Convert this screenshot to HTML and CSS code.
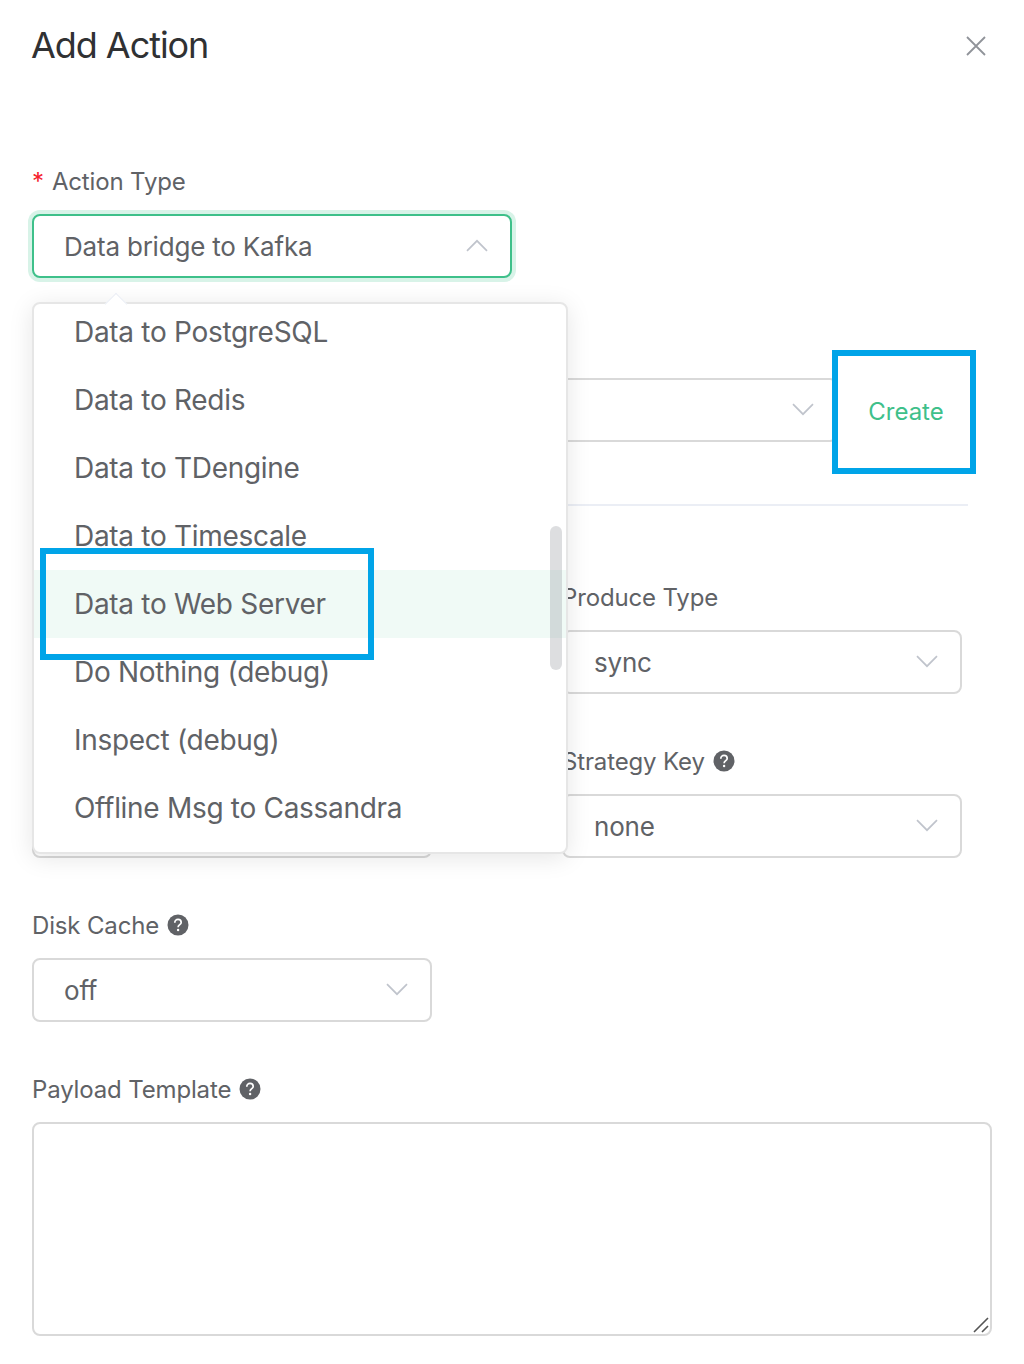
FILE: index.html
```html
<!DOCTYPE html>
<html lang="en">
<head>
<meta charset="utf-8">
<title>Add Action</title>
<link rel="stylesheet" href="styles.css">
</head>
<body>
<svg class="defs" width="0" height="0">
  <symbol id="chevron" viewBox="0 0 22 13"><path d="M1 1.2 11 11.2 21 1.2" fill="none" stroke="currentColor" stroke-width="1.7"/></symbol>
  <symbol id="help" viewBox="0 0 22 22">
    <circle cx="11" cy="11" r="10.5" fill="currentColor"/>
    <path d="M7.8 8.7C7.8 6.6 9.2 5.4 11 5.4S14.2 6.6 14.2 8.4C14.2 10.6 11.1 10.7 11.1 13.2" fill="none" stroke="#fff" stroke-width="1.7"/>
    <circle cx="11.1" cy="16" r="1.2" fill="#fff"/>
  </symbol>
</svg>
<main class="dialog">
  <header class="header">
    <h1 class="title">Add Action</h1>
    <svg class="close" viewBox="0 0 20 20"><path d="M1 1 19 19M19 1 1 19" fill="none" stroke="currentColor" stroke-width="1.8"/></svg>
  </header>
  <form class="form">
    <div class="field">
      <div class="label"><span class="required">*</span><span>Action Type</span></div>
      <div class="select select-type is-open">
        <span class="value">Data bridge to Kafka</span>
        <svg class="chevron up"><use href="#chevron"/></svg>
        <div class="dropdown">
          <div class="arrow"></div>
          <div class="viewport">
            <ul class="options">
              <li>Data to PostgreSQL</li>
              <li>Data to Redis</li>
              <li>Data to TDengine</li>
              <li>Data to Timescale</li>
              <li class="active">Data to Web Server<span class="marker marker-option"></span></li>
              <li>Do Nothing (debug)</li>
              <li>Inspect (debug)</li>
              <li>Offline Msg to Cassandra</li>
            </ul>
          </div>
          <div class="scrollbar"></div>
        </div>
      </div>
    </div>
    <div class="field resource">
      <div class="select select-resource"><svg class="chevron"><use href="#chevron"/></svg></div>
      <div class="create"><span>Create</span><span class="marker marker-create"></span></div>
    </div>
    <hr class="divider">
    <div class="row">
      <div class="field">
        <div class="label"></div>
        <div class="select"></div>
      </div>
      <div class="field">
        <div class="label">Produce Type</div>
        <div class="select"><span class="value">sync</span><svg class="chevron"><use href="#chevron"/></svg></div>
      </div>
    </div>
    <div class="row">
      <div class="field">
        <div class="label"></div>
        <div class="select"></div>
      </div>
      <div class="field">
        <div class="label">Strategy Key<svg class="help"><use href="#help"/></svg></div>
        <div class="select"><span class="value">none</span><svg class="chevron"><use href="#chevron"/></svg></div>
      </div>
    </div>
    <div class="row">
      <div class="field">
        <div class="label">Disk Cache<svg class="help"><use href="#help"/></svg></div>
        <div class="select"><span class="value">off</span><svg class="chevron"><use href="#chevron"/></svg></div>
      </div>
    </div>
    <div class="field">
      <div class="label">Payload Template<svg class="help"><use href="#help"/></svg></div>
      <div class="textarea">
        <svg class="grip" viewBox="0 0 16 16"><path d="M1 15 15 1M9 15 15 9" fill="none" stroke="#555" stroke-width="1.6"/></svg>
      </div>
    </div>
  </form>
</main>
</body>
</html>
```
FILE: styles.css
```css
* { box-sizing: border-box; }
body {
  margin: 0;
  background: #fff;
  color: #606266;
  font-family: Inter, "Liberation Sans", sans-serif;
}
.defs { display: block; }
.dialog {
  width: 1024px;
  height: 1364px;
  padding: 0 32px;
  overflow: hidden;
}
.header {
  display: flex;
  align-items: center;
  justify-content: space-between;
  height: 92px;
  padding-right: 6px;
}
.title {
  margin: 0 0 2px -1px;
  color: #303133;
  font-size: 36px;
  font-weight: 400;
  letter-spacing: -1.05px;
}
.close { width: 20px; height: 20px; color: #909399; }
.form { padding-top: 58px; }
.field { margin-bottom: 36px; }
.label {
  display: flex;
  align-items: center;
  height: 64px;
  padding-bottom: 2px;
  font-size: 24px;
  letter-spacing: -0.15px;
}
.required { margin-right: 8px; color: #f5222d; }
.help { width: 22px; height: 22px; margin-left: 8px; }
.select {
  position: relative;
  display: flex;
  align-items: center;
  width: 400px;
  height: 64px;
  padding: 0 22px 0 30px;
  border: 2px solid #d9d9d9;
  border-radius: 8px;
  background: #fff;
  font-size: 26px;
  letter-spacing: -0.2px;
}
.select-type { width: 480px; }
.is-open {
  border-color: #3ec08a;
  box-shadow: 0 0 0 4px #d8f3e8;
}
.chevron {
  width: 22px;
  height: 13px;
  margin: 0 0 1px auto;
  color: #c0c4cc;
}
.up { transform: rotate(180deg); }
.dropdown {
  position: absolute;
  z-index: 2;
  top: 86px;
  left: -2px;
  width: 536px;
  height: 552px;
  border: 2px solid #e6e6e6;
  border-radius: 8px;
  background: #fff;
  box-shadow: 0 4px 24px rgba(0, 0, 0, 0.1);
}
.arrow {
  position: absolute;
  top: -8px;
  left: 74px;
  width: 16px;
  height: 16px;
  border: 1px solid #ebeef5;
  border-right: 0;
  border-bottom: 0;
  background: #fff;
  transform: rotate(45deg);
}
.viewport { position: relative; height: 548px; }
.options {
  margin: 0;
  padding: 0;
  list-style: none;
  transform: translateY(-6px);
}
.options li {
  position: relative;
  height: 68px;
  padding-left: 40px;
  font-size: 28px;
  letter-spacing: -0.3px;
  line-height: 69px;
}
.options .active { background: #f0faf6; }
.scrollbar {
  position: absolute;
  top: 222px;
  right: 4px;
  width: 12px;
  height: 144px;
  border-radius: 6px;
  background: rgba(144, 147, 153, 0.3);
}
.marker { position: absolute; border: 6px solid #00a4e8; }
.marker-option { z-index: 1; top: -22px; left: 6px; width: 334px; height: 112px; }
.marker-create { inset: 0; }
.resource { display: flex; align-items: center; padding-top: 36px; margin-bottom: 0; }
.select-resource { width: 806px; margin-bottom: 4px; }
.create {
  position: relative;
  display: flex;
  align-items: center;
  justify-content: center;
  width: 144px;
  height: 124px;
  padding: 0 0 2px 4px;
  margin-left: -6px;
  color: #3ec08a;
  font-size: 24px;
}
.divider {
  width: 936px;
  height: 2px;
  margin: 30px 0 60px;
  border: 0;
  background: #ebeef5;
}
.row { display: flex; gap: 130px; }
.textarea {
  display: flex;
  align-items: flex-end;
  justify-content: flex-end;
  height: 214px;
  padding: 1px;
  border: 2px solid #d9d9d9;
  border-radius: 8px;
}
.grip { width: 16px; height: 16px; }
```
